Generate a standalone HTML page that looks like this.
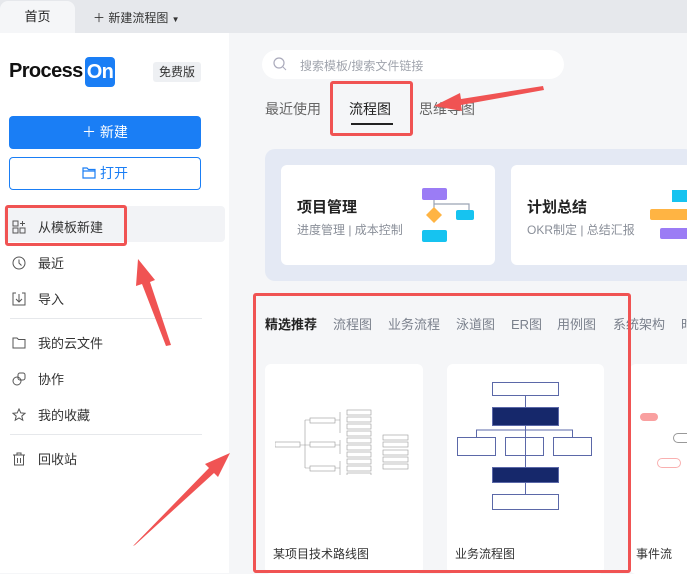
<!DOCTYPE html>
<html><head><meta charset="utf-8"><style>
*{margin:0;padding:0;box-sizing:border-box}
body{width:687px;height:573px;overflow:hidden;position:relative;background:#f5f6f8;font-family:"Liberation Sans","Noto Sans CJK SC",sans-serif;color:#222}
.abs{position:absolute}
.top{left:0;top:0;width:687px;height:33px;background:#e6e8ec}
.tab1{left:0;top:1px;width:75px;height:32px;background:#f5f6f8;border-radius:8px 8px 0 0;font-size:13px;text-align:center;line-height:32px;color:#222}
.side{left:0;top:33px;width:229px;height:540px;background:#fff}
.menu{left:12px;font-size:13px;color:#333;display:flex;align-items:center}
.menu svg{margin-right:12px}
.tl{font-size:14px;color:#666}
.card{background:#fff;border-radius:6px}
.ct{font-size:12px;color:#333}
.red{border:3px solid #f05353;border-radius:3px}
.cat span{position:absolute;top:0;white-space:nowrap}
</style></head><body>
<div class="abs top"></div>
<div class="abs tab1">首页</div>
<div class="abs" style="left:93px;top:9px;font-size:12px;color:#333">＋ 新建流程图 <span style="font-size:8px">▼</span></div>
<div class="abs side"></div>
<div class="abs" style="left:9px;top:60px;font-size:20px;font-weight:bold;color:#111;letter-spacing:-0.6px">Process</div>
<div class="abs" style="left:85px;top:57px;width:30px;height:30px;background:#1a7ef5;border-radius:4px;color:#fff;font-size:20px;font-weight:bold;line-height:30px;text-align:center;letter-spacing:-0.6px">On</div>
<div class="abs" style="left:153px;top:62px;width:48px;height:20px;background:#eef0f3;border-radius:3px;font-size:12px;text-align:center;line-height:20px;color:#333">免费版</div>
<div class="abs" style="left:9px;top:116px;width:192px;height:33px;background:#1a7ef5;border-radius:4px;color:#fff;font-size:14px;text-align:center;line-height:33px">＋ 新建</div>
<div class="abs" style="left:9px;top:157px;width:192px;height:33px;border:1px solid #1a7ef5;border-radius:4px;color:#1a7ef5;font-size:14px;text-align:center;line-height:31px">
<svg width="14" height="12" viewBox="0 0 14 12" style="vertical-align:-1px;margin-right:4px"><path d="M1 1h4l1.5 1.5H13v8.5H1z M1 4h12" fill="none" stroke="#1a7ef5" stroke-width="1.2"/></svg>打开</div>
<div class="abs" style="left:4px;top:206px;width:221px;height:36px;background:#f2f3f6;border-radius:4px"></div>
<div class="abs menu" style="top:217px"><svg width="14" height="14"><rect x="1" y="1" width="5" height="5" fill="none" stroke="#555"/><rect x="1" y="8" width="5" height="5" fill="none" stroke="#555"/><rect x="8" y="8" width="5" height="5" fill="none" stroke="#555"/><path d="M10.5 1v5M8 3.5h5" stroke="#555"/></svg>从模板新建</div>
<div class="abs menu" style="top:253px"><svg width="14" height="14"><circle cx="7" cy="7" r="6" fill="none" stroke="#555"/><path d="M7 3.5V7l2.5 2.5" fill="none" stroke="#555"/></svg>最近</div>
<div class="abs menu" style="top:289px"><svg width="14" height="14"><path d="M4 1H1v12h12V1h-3M7 2v8M4 7l3 3 3-3" fill="none" stroke="#555"/></svg>导入</div>
<div class="abs" style="left:10px;top:318px;width:192px;height:1px;background:#e6e8eb"></div>
<div class="abs menu" style="top:333px"><svg width="14" height="14"><path d="M1 2h4l1.5 1.5H13V12H1z" fill="none" stroke="#555"/></svg>我的云文件</div>
<div class="abs menu" style="top:369px"><svg width="14" height="14"><circle cx="5" cy="9" r="4" fill="none" stroke="#555"/><rect x="6" y="1" width="7" height="7" rx="2" fill="none" stroke="#555"/></svg>协作</div>
<div class="abs menu" style="top:405px"><svg width="14" height="14"><path d="M7 1l1.8 3.9 4.2.4-3.2 2.8 1 4.1L7 10l-3.8 2.2 1-4.1L1 5.3l4.2-.4z" fill="none" stroke="#555"/></svg>我的收藏</div>
<div class="abs" style="left:10px;top:434px;width:192px;height:1px;background:#e6e8eb"></div>
<div class="abs menu" style="top:449px"><svg width="14" height="14"><path d="M1 3h12M5 3V1h4v2M2.5 3v10h9V3M5.5 6v5M8.5 6v5" fill="none" stroke="#555"/></svg>回收站</div>

<div class="abs" style="left:262px;top:50px;width:302px;height:29px;background:#fff;border-radius:15px"></div>
<svg class="abs" style="left:273px;top:57px" width="14" height="14"><circle cx="6" cy="6" r="5" fill="none" stroke="#aab" stroke-width="1.2"/><path d="M10 10l3 3" stroke="#aab"/></svg>
<div class="abs" style="left:300px;top:57px;font-size:12px;color:#a0a4ad">搜索模板/搜索文件链接</div>
<div class="abs tl" style="left:265px;top:99px">最近使用</div>
<div class="abs tl" style="left:349px;top:99px;color:#222">流程图</div>
<div class="abs" style="left:351px;top:123px;width:42px;height:2px;background:#222"></div>
<div class="abs tl" style="left:419px;top:99px">思维导图</div>

<div class="abs" style="left:265px;top:149px;width:430px;height:132px;background:#e4e9f4;border-radius:10px"></div>
<div class="abs card" style="left:281px;top:165px;width:214px;height:100px"></div>
<div class="abs" style="left:297px;top:196px;font-size:15px;font-weight:bold;color:#222">项目管理</div>
<div class="abs" style="left:297px;top:221px;font-size:12px;color:#8a8f99">进度管理 | 成本控制</div>
<svg class="abs" style="left:420px;top:185px" width="60" height="60"><rect x="2" y="3" width="25" height="12" rx="2" fill="#9b7cf5"/><path d="M14 15v10M14 19h35v8" fill="none" stroke="#9aa3b5" stroke-width="1.2"/><rect x="36" y="25" width="18" height="10" rx="2" fill="#16c3f0"/><path d="M14 22l8 8-8 8-8-8z" fill="#ffb443"/><rect x="2" y="45" width="25" height="12" rx="2" fill="#16c3f0"/></svg>
<div class="abs card" style="left:511px;top:165px;width:200px;height:100px"></div>
<div class="abs" style="left:527px;top:196px;font-size:15px;font-weight:bold;color:#222">计划总结</div>
<div class="abs" style="left:527px;top:221px;font-size:12px;color:#8a8f99">OKR制定 | 总结汇报</div>
<div class="abs" style="left:672px;top:190px;width:20px;height:12px;background:#16c3f0"></div>
<div class="abs" style="left:650px;top:209px;width:40px;height:11px;background:#ffb443;border-radius:2px"></div>
<div class="abs" style="left:660px;top:228px;width:30px;height:11px;background:#9b7cf5;border-radius:2px"></div>

<div class="abs cat" style="left:0;top:314px;width:687px;font-size:13px;color:#7a808c">
<span style="left:265px;color:#222;font-weight:bold">精选推荐</span><span style="left:333px">流程图</span><span style="left:388px">业务流程</span><span style="left:456px">泳道图</span><span style="left:511px">ER图</span><span style="left:557px">用例图</span><span style="left:613px">系统架构</span><span style="left:681px">时</span></div>

<div class="abs card" style="left:265px;top:364px;width:158px;height:210px"></div>
<svg class="abs" style="left:275px;top:405px" width="140" height="70"><g fill="#fff" stroke="#999" stroke-width="0.6"><rect x="0" y="37" width="25" height="5"/><rect x="35" y="13" width="25" height="5"/><rect x="35" y="37" width="25" height="5"/><rect x="35" y="61" width="25" height="5"/><rect x="72" y="5" width="24" height="5"/><rect x="72" y="12" width="24" height="5"/><rect x="72" y="19" width="24" height="5"/><rect x="72" y="26" width="24" height="5"/><rect x="72" y="33" width="24" height="5"/><rect x="72" y="40" width="24" height="5"/><rect x="72" y="47" width="24" height="5"/><rect x="72" y="54" width="24" height="5"/><rect x="72" y="61" width="24" height="5"/><rect x="72" y="68" width="24" height="5"/><rect x="108" y="30" width="25" height="5"/><rect x="108" y="37" width="25" height="5"/><rect x="108" y="45" width="25" height="5"/><rect x="108" y="52" width="25" height="5"/><rect x="108" y="59" width="25" height="5"/></g><path d="M25 40h5M30 15v48M30 15h5M30 40h5M30 63h5M60 15h5M65 7v21M60 40h5M65 35v14M60 63h5M65 56v14" fill="none" stroke="#999" stroke-width="0.6"/></svg>
<div class="abs ct" style="left:273px;top:545px">某项目技术路线图</div>
<div class="abs card" style="left:447px;top:364px;width:157px;height:210px"></div>
<svg class="abs" style="left:447px;top:364px" width="157" height="160"><g stroke="#5b68a8" stroke-width="1"><rect x="45.5" y="18.5" width="66" height="13" fill="#fff"/><rect x="45.5" y="43.5" width="66" height="18" fill="#16286b"/><rect x="10.5" y="73.5" width="38" height="18" fill="#fff"/><rect x="58.5" y="73.5" width="38" height="18" fill="#fff"/><rect x="106.5" y="73.5" width="38" height="18" fill="#fff"/><rect x="45.5" y="103.5" width="66" height="15" fill="#16286b"/><rect x="45.5" y="130.5" width="66" height="15" fill="#fff"/><path d="M78.5 31v12M78.5 61v42M78.5 118v12M29.5 73v-7h96v7" fill="none"/></g></svg>
<div class="abs ct" style="left:455px;top:545px">业务流程图</div>
<div class="abs card" style="left:630px;top:364px;width:70px;height:210px"></div>
<div class="abs" style="left:640px;top:413px;width:18px;height:8px;background:#f9a0a0;border-radius:4px"></div>
<div class="abs" style="left:673px;top:433px;width:20px;height:10px;border:1px solid #999;border-radius:5px"></div>
<div class="abs" style="left:657px;top:458px;width:24px;height:10px;border:1px solid #f9b0b0;border-radius:5px"></div>
<div class="abs ct" style="left:636px;top:545px">事件流</div>

<div class="abs red" style="left:5px;top:205px;width:122px;height:41px"></div>
<div class="abs red" style="left:330px;top:81px;width:83px;height:55px"></div>
<div class="abs red" style="left:253px;top:293px;width:378px;height:280px"></div>
<svg class="abs" style="left:0;top:0" width="687" height="573"><g fill="#f05353"><path d="M543 86L461 99l-1-6-26 13 28 5-1-6 83-15z"/><path d="M171 345L150 282l5-2-17-21-2 27 6-2 24 62z"/><path d="M135 545l79-72 4 4 12-24-25 11 4 4-76 78z"/></g></svg>
</body></html>
